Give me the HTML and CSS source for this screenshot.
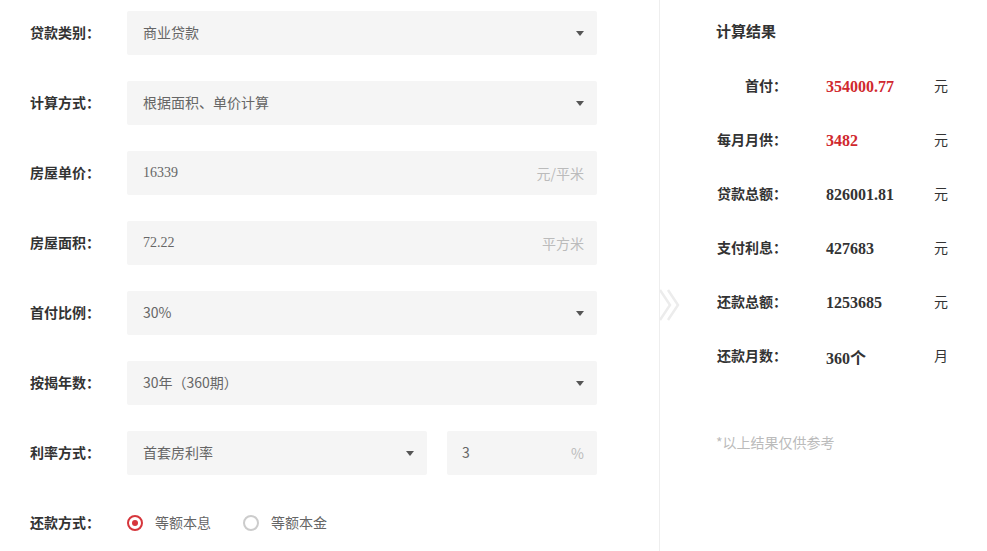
FILE: index.html
```html
<!DOCTYPE html>
<html lang="zh">
<head>
<meta charset="utf-8">
<title>房贷计算器</title>
<link rel="stylesheet" href="styles.css">
</head>
<body>
<div class="calc">
  <div class="form">
    <div class="row">
      <div class="label">贷款类别：</div>
      <div class="field select"><span class="val">商业贷款</span><span class="caret"></span></div>
    </div>
    <div class="row">
      <div class="label">计算方式：</div>
      <div class="field select"><span class="val">根据面积、单价计算</span><span class="caret"></span></div>
    </div>
    <div class="row">
      <div class="label">房屋单价：</div>
      <div class="field input"><span class="val num">16339</span><span class="unit">元/平米</span></div>
    </div>
    <div class="row">
      <div class="label">房屋面积：</div>
      <div class="field input"><span class="val num">72.22</span><span class="unit">平方米</span></div>
    </div>
    <div class="row">
      <div class="label">首付比例：</div>
      <div class="field select"><span class="val">30%</span><span class="caret"></span></div>
    </div>
    <div class="row">
      <div class="label">按揭年数：</div>
      <div class="field select"><span class="val">30年（360期）</span><span class="caret"></span></div>
    </div>
    <div class="row">
      <div class="label">利率方式：</div>
      <div class="field select short"><span class="val">首套房利率</span><span class="caret"></span></div>
      <div class="field input rate"><span class="val">3</span><span class="unit">%</span></div>
    </div>
    <div class="row">
      <div class="label">还款方式：</div>
      <div class="radios">
        <label class="radio on"><span class="dot"></span><span class="rtext">等额本息</span></label>
        <label class="radio"><span class="dot"></span><span class="rtext">等额本金</span></label>
      </div>
    </div>
  </div>
  <div class="result">
    <svg class="chev" width="22" height="34" viewBox="0 0 22 34">
      <polyline points="1,2 11,17 1,32" fill="none" stroke="#ececec" stroke-width="2.5"/>
      <polyline points="9,2 19,17 9,32" fill="none" stroke="#ececec" stroke-width="2.5"/>
    </svg>
    <div class="title">计算结果</div>
    <div class="rrow"><div class="rlabel">首付：</div><div class="rval red">354000.77</div><div class="runit">元</div></div>
    <div class="rrow"><div class="rlabel">每月月供：</div><div class="rval red">3482</div><div class="runit">元</div></div>
    <div class="rrow"><div class="rlabel">贷款总额：</div><div class="rval">826001.81</div><div class="runit">元</div></div>
    <div class="rrow"><div class="rlabel">支付利息：</div><div class="rval">427683</div><div class="runit">元</div></div>
    <div class="rrow"><div class="rlabel">还款总额：</div><div class="rval">1253685</div><div class="runit">元</div></div>
    <div class="rrow"><div class="rlabel">还款月数：</div><div class="rval">360个</div><div class="runit">月</div></div>
    <div class="note">*以上结果仅供参考</div>
  </div>
</div>
</body>
</html>
```

FILE: styles.css
```css
* { box-sizing: border-box; }
html, body { margin: 0; padding: 0; background: #fff; }
body {
  font-family: "Noto Sans CJK SC", "Noto Sans", sans-serif;
  color: #333;
  width: 987px;
  height: 551px;
  overflow: hidden;
}
.calc { display: flex; height: 551px; }
.form {
  width: 660px;
  padding: 11px 0 0 30px;
  border-right: 1px solid #eeeeee;
}
.row {
  display: flex;
  align-items: center;
  height: 44px;
  margin-bottom: 26px;
}
.label {
  width: 97px;
  font-size: 14px;
  line-height: 20px;
  padding-bottom: 3px;
  font-weight: bold;
  color: #333;
}
.field {
  width: 470px;
  height: 44px;
  background: #f5f5f5;
  border-radius: 2px;
  display: flex;
  align-items: center;
  justify-content: space-between;
  padding: 0 13px 0 16px;
  font-size: 14px;
  color: #666;
}
.val { line-height: 20px; padding-bottom: 3px; }
.field.short { width: 300px; }
.field.rate { width: 150px; margin-left: 20px; padding-left: 15px; }
.val.num { font-family: "Liberation Serif", serif; font-size: 14px; padding-bottom: 1px; }
.unit { color: #bbb; font-size: 14px; line-height: 20px; padding-bottom: 1px; }
.caret {
  width: 0; height: 0;
  border-left: 4px solid transparent;
  border-right: 4px solid transparent;
  border-top: 5px solid #555;
}
.radios { display: flex; align-items: center; font-size: 14px; color: #666; }
.radio { display: flex; align-items: center; margin-right: 32px; }
.rtext { line-height: 20px; padding-bottom: 2px; }
.dot {
  width: 16px; height: 16px;
  border: 2px solid #ccc;
  border-radius: 50%;
  margin-right: 12px;
  display: flex; align-items: center; justify-content: center;
}
.radio.on .dot { border-color: #d6363c; }
.radio.on .dot::after {
  content: "";
  width: 6px; height: 6px; border-radius: 50%;
  background: #d6363c;
}
.result {
  position: relative;
  flex: 1;
  padding: 20px 0 0 57px;
}
.chev { position: absolute; left: -1px; top: 288px; }
.title { font-size: 15px; font-weight: bold; color: #333; height: 21px; line-height: 21px; margin-bottom: 17px; margin-left: -1px; }
.rrow { display: flex; align-items: center; height: 54px; }
.rlabel { width: 70px; text-align: right; font-size: 14px; font-weight: bold; color: #333; }
.rval {
  width: 108px;
  margin-left: 39px;
  padding-top: 4px;
  font-family: "Liberation Serif", "Noto Sans CJK SC", serif;
  font-size: 16px;
  font-weight: bold;
  color: #333;
}
.rval.red { color: #d0282e; }
.runit { font-size: 14px; color: #333; }
.note { margin-top: 50px; margin-left: -1px; font-size: 14px; color: #bbb; }
```
